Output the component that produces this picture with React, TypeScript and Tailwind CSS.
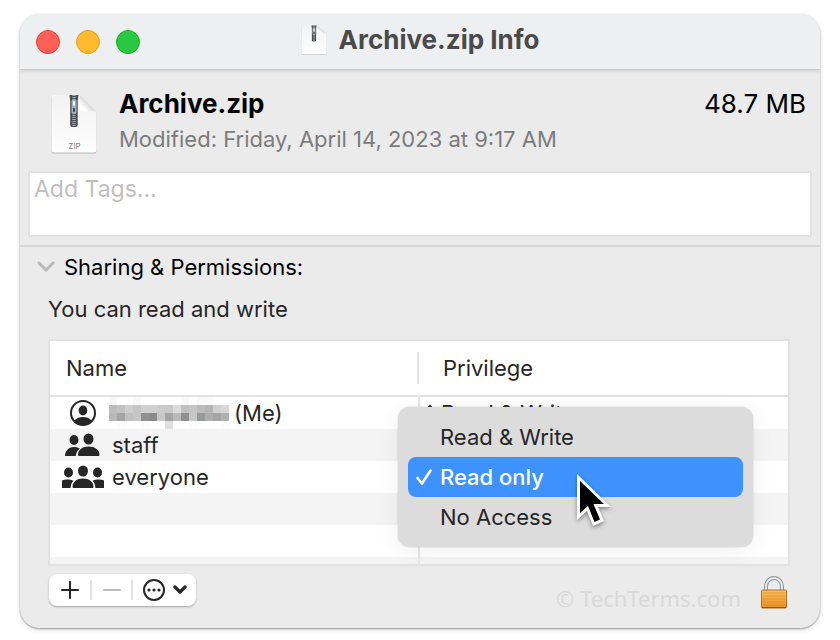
import React, { useState } from 'react';

const NAME_BLOCKS: string[][] = [
  ['#f8f8f8', '#ffffff', '#ffffff', '#f9f9f9', '#ffffff', '#ffffff', '#ffffff', '#ffffff', '#ffffff', '#f9f9f9', '#ffffff', '#f9f9f9', '#fafafa', '#ffffff', '#ffffff'],
  ['#bcbcbc', '#c2c2c2', '#cfcfcf', '#c6c6c6', '#d0d0d0', '#cfcfcf', '#cbcbcb', '#cacaca', '#dcdcdc', '#bfbfbf', '#c6c6c6', '#bcbcbc', '#b5b5b5', '#d0d0d0', '#d8d8d8'],
  ['#b8b8b8', '#a5a5a5', '#c0c0c0', '#c6c6c6', '#919191', '#8b8b8b', '#c8c8c8', '#a5a5a5', '#bababa', '#8e9190', '#c8c8c8', '#979b99', '#adadad', '#a2a5a4', '#b0b0b0'],
  ['#ffffff', '#fcfcfc', '#ffffff', '#ffffff', '#fcfcfc', '#ffffff', '#ffffff', '#e0e0e0', '#ffffff', '#ffffff', '#fcfcfc', '#ffffff', '#ffffff', '#ffffff', '#fcfcfc'],
];

const PRIVILEGES = ['Read & Write', 'Read only', 'No Access'];

const ZipIcon = ({ id, label, className }: { id: string; label?: string; className: string }) => (
  <svg viewBox="0 0 46 60" preserveAspectRatio="none" className={className} aria-hidden="true">
    <defs>
      <linearGradient id={`${id}-page`} x1="0" y1="0" x2="0" y2="1">
        <stop offset="0" stopColor="#f3f3f3" />
        <stop offset="1" stopColor="#fdfdfd" />
      </linearGradient>
      <linearGradient id={`${id}-fold`} x1="0" y1="1" x2="1" y2="0">
        <stop offset="0.2" stopColor="#ffffff" />
        <stop offset="0.5" stopColor="#d8d8d8" />
      </linearGradient>
    </defs>
    <path d="M2.500 2H29l16.500 16.500V57.500a2 2 0 0 1-2 2H2.500a2 2 0 0 1-2-2V4a2 2 0 0 1 2-2z" fill="#b9b9b9" />
    <path d="M2.500 1H29l16.500 16.500V56.500a2 2 0 0 1-2 2H2.500a2 2 0 0 1-2-2V3a2 2 0 0 1 2-2z" fill={`url(#${id}-page)`} />
    <path d="M29 1l16.500 16.500H31a2 2 0 0 1-2-2z" fill={`url(#${id}-fold)`} />
    <path d="M18.500 1h9l-.8 6v24a2 2 0 0 1-2 2h-3.500a2 2 0 0 1-2-2V7z" fill="#4c4d50" />
    <path d="M23 1v31" stroke="#a9abad" strokeWidth="3.500" strokeDasharray="1 1" />
    <rect x="20.500" y="5" width="5" height="15" rx="2.500" fill="#a3b1bb" />
    <rect x="22" y="7" width="2" height="5" rx="1" fill="#e8eef2" />
    <rect x="22" y="14" width="2" height="4" rx="1" fill="#42474b" />
    {label && (
      <text x="23.500" y="55" textAnchor="middle" fontSize="8" fill="#7c7c7c" fontFamily="Inter, sans-serif">
        {label}
      </text>
    )}
  </svg>
);

const MeIcon = () => (
  <svg viewBox="0 0 26 26" className="h-[26px] w-[26px]" aria-hidden="true">
    <circle cx="13" cy="13" r="12" fill="none" stroke="#262626" strokeWidth="2" />
    <ellipse cx="13" cy="10.500" rx="4.300" ry="5" fill="#262626" />
    <path d="M4.500 20.500c2-2.500 5-3.500 8.500-3.500s6.500 1 8.500 3.500c-2 3-5 4.500-8.500 4.500s-6.500-1.500-8.500-4.500z" fill="#262626" />
  </svg>
);

const StaffIcon = () => (
  <svg viewBox="0 0 36 24" className="h-6 w-9" fill="#262626" aria-hidden="true">
    <ellipse cx="10" cy="7" rx="4.500" ry="5" />
    <path d="M1 23c0-5 3.500-9 9-9 2.500 0 4.200.6 5.800 1.700-2.500 1.800-3.800 4.300-4 7.300z" />
    <ellipse cx="24.500" cy="6" rx="5" ry="5.600" />
    <path d="M14 21.500c0-4.500 4.500-8 10.500-8s11 3.500 11 8c0 1-.5 1.500-1.500 1.500H15.500c-1 0-1.500-.5-1.500-1.500z" />
  </svg>
);

const EveryoneIcon = () => (
  <svg viewBox="0 0 42 24" className="h-6 w-[42px]" fill="#262626" aria-hidden="true">
    <ellipse cx="6.500" cy="7.500" rx="4.500" ry="5" />
    <ellipse cx="35.500" cy="7.500" rx="4.500" ry="5" />
    <ellipse cx="21" cy="6" rx="5" ry="5.600" />
    <path d="M0 15.500c3-1.500 8.500-1.500 11.500.2C9.500 17.500 8.700 20 8.600 23H0z" />
    <path d="M42 15.500c-3-1.500-8.500-1.500-11.500.2 2 1.800 2.800 4.300 2.900 7.300H42z" />
    <path d="M10.500 21.500c0-4.500 4.500-8 10.500-8s10.500 3.500 10.500 8c0 1-.5 1.500-1.500 1.500H12c-1 0-1.500-.5-1.500-1.500z" />
  </svg>
);

const LockIcon = () => (
  <svg viewBox="0 0 26 33" className="h-[33px] w-[26px]" aria-hidden="true">
    <defs>
      <linearGradient id="lock-body" x1="0" y1="0" x2="0" y2="1">
        <stop offset="0" stopColor="#fbc566" />
        <stop offset="0.500" stopColor="#f5a93c" />
        <stop offset="1" stopColor="#e8922b" />
      </linearGradient>
    </defs>
    <path d="M5 15v-4.500a8 8.500 0 0 1 16 0V15" fill="none" stroke="#8e959d" strokeWidth="4" />
    <path d="M5 15v-4.500a8 8.500 0 0 1 16 0V15" fill="none" stroke="#e6eaee" strokeWidth="2" />
    <rect x="0.500" y="14" width="25" height="18" rx="1" fill="url(#lock-body)" stroke="#b56a22" />
    <path d="M2 17h22M2 20h22M2 23h22M2 26h22M2 29h22" stroke="#d98a2b" strokeWidth="0.700" />
    <path d="M1 31.500h24" stroke="#9c4f17" />
  </svg>
);

const Cursor = () => (
  <svg
    viewBox="0 0 36 56"
    className="pointer-events-none absolute left-[177px] top-[65px] h-14 w-9 drop-shadow-[0_2px_2px_rgba(0,0,0,0.4)]"
    aria-hidden="true"
  >
    <path d="M2 2v46l10-9 6 15 11-5-6-14h13z" fill="#fff" />
    <path d="M5 9v32l8-7 6.500 16 5.500-2.500L18.500 32H29z" fill="#000" />
  </svg>
);

interface TrafficLightProps {
  label: string;
  className: string;
}

const TrafficLight = ({ label, className }: TrafficLightProps) => (
  <button type="button" aria-label={label} className={`h-6 w-6 rounded-full border ${className}`} />
);

interface PrivilegeMenuProps {
  value: string;
  onSelect: (value: string) => void;
}

const PrivilegeMenu = ({ value, onSelect }: PrivilegeMenuProps) => (
  <div
    role="menu"
    className="absolute -left-[22px] -top-[54px] right-[35px] z-10 rounded-xl bg-[#dcdcdc] p-[10px] shadow-[0_0_2px_rgba(0,0,0,0.2),0_4px_24px_rgba(0,0,0,0.06)]"
  >
    {PRIVILEGES.map((item) => {
      const selected = item === value;
      return (
        <button
          key={item}
          type="button"
          role="menuitemradio"
          aria-checked={selected}
          onClick={() => onSelect(item)}
          className={`flex h-10 w-full items-center rounded-lg text-left ${
            selected ? 'bg-[#3d92fe] font-medium text-white' : 'text-[#262626]'
          }`}
        >
          <span className="flex w-8 justify-center">
            {selected && (
              <svg viewBox="0 0 16 16" className="h-4 w-4" aria-hidden="true">
                <path d="M1.500 9l4.500 5.500L14.500 1.500" fill="none" stroke="#fff" strokeWidth="2.600" strokeLinecap="round" strokeLinejoin="round" />
              </svg>
            )}
          </span>
          {item}
        </button>
      );
    })}
    <Cursor />
  </div>
);

export default function App() {
  const [privilege, setPrivilege] = useState('Read only');
  const [tags, setTags] = useState('');

  return (
    <div className="min-h-screen bg-white px-5 pb-3 pt-[14px] font-['Inter',sans-serif] text-[22px] leading-8 text-[#262626]">
      <main className="overflow-hidden rounded-[20px] bg-[#ebebeb] shadow-[0_1px_2px_rgba(0,0,0,0.35),0_2px_5px_rgba(0,0,0,0.12)]">
        {/* Title bar */}
        <header className="relative z-10 flex h-14 items-center border-b border-[#c9cacb] bg-[#eeeff1] px-4 shadow-[0_1px_3px_rgba(0,0,0,0.12)]">
          <div className="flex flex-1 gap-4">
            <TrafficLight label="Close" className="border-[#e2463f] bg-[#fe5f57]" />
            <TrafficLight label="Minimize" className="border-[#e0a028] bg-[#febb2e]" />
            <TrafficLight label="Zoom" className="border-[#1eac30] bg-[#28c840]" />
          </div>
          <div className="flex items-center gap-3 pb-1">
            <ZipIcon id="title-zip" className="h-[30px] w-[26px]" />
            <h1 className="text-[26px] font-bold text-[#4a4a4a]">Archive.zip Info</h1>
          </div>
          <div className="flex-1" />
        </header>

        {/* File summary */}
        <section className="border-b-2 border-[#d5d5d5] px-2 pb-2 pt-4">
          <div className="flex pl-[23px] pr-[6px]">
            <ZipIcon id="file-zip" label="ZIP" className="mt-2 h-[60px] w-[46px]" />
            <div className="ml-[22px] flex-1">
              <h2 className="text-[26px] font-bold leading-9 text-black">Archive.zip</h2>
              <p className="leading-[34px] text-[#7c7c7c]">Modified: Friday, April 14, 2023 at 9:17 AM</p>
            </div>
            <p className="text-[26px] leading-9 text-black">48.7 MB</p>
          </div>
          <textarea
            aria-label="Tags"
            placeholder="Add Tags..."
            value={tags}
            onChange={(e) => setTags(e.target.value)}
            className="mt-[15px] block h-[66px] w-full resize-none border-2 border-[#e2e2e2] bg-white px-1 text-[23px] leading-8 outline-none placeholder:text-[#bfbfbf]"
          />
        </section>

        {/* Sharing & Permissions */}
        <section className="px-7 pb-[14px] pt-[2px]">
          <button type="button" className="-ml-3 flex items-center gap-2 leading-9 text-black">
            <svg viewBox="0 0 20 12" className="h-3 w-5" aria-hidden="true">
              <path d="M3 2l7 7 7-7" fill="none" stroke="#b9b9b9" strokeWidth="3" strokeLinecap="round" strokeLinejoin="round" />
            </svg>
            Sharing &amp; Permissions:
          </button>
          <p className="mt-2 leading-8">You can read and write</p>

          <div className="mr-[2px] mt-[14px] border-2 border-[#e2e2e2] bg-white">
            <table className="w-full table-fixed border-collapse text-left">
              <thead>
                <tr className="border-b-2 border-[#e2e2e2]">
                  <th className="h-[55px] p-0 font-normal">
                    <div className="flex h-8 items-center border-r-2 border-[#e2e2e2] pl-4">Name</div>
                  </th>
                  <th className="p-0 pl-6 font-normal">Privilege</th>
                </tr>
              </thead>
              <tbody>
                <tr className="h-8">
                  <td className="border-r-2 border-[#e6e6e6] p-0">
                    <div className="flex items-center pl-5">
                      <MeIcon />
                      <div className="ml-[13px] grid grid-cols-[repeat(15,8px)]" aria-hidden="true">
                        {NAME_BLOCKS.flat().map((color, i) => (
                          <span key={i} className="h-2" style={{ backgroundColor: color }} />
                        ))}
                      </div>
                      <span className="ml-[5px]">(Me)</span>
                    </div>
                  </td>
                  <td className="p-0">
                    <div className="flex items-center pl-[5px]">
                      <svg viewBox="0 0 10 18" className="h-[18px] w-[10px]" aria-hidden="true">
                        <path d="M1.500 6L5 2l3.500 4M1.500 12L5 16l3.500-4" fill="none" stroke="#262626" strokeWidth="2" />
                      </svg>
                      <select aria-label="Privilege for owner" className="ml-[6px] h-8 appearance-none bg-transparent outline-none">
                        <option>Read &amp; Write</option>
                      </select>
                    </div>
                  </td>
                </tr>
                <tr className="h-8 bg-[#f4f4f4]">
                  <td className="border-r-2 border-[#e6e6e6] p-0">
                    <div className="flex items-center pl-[14px]">
                      <StaffIcon />
                      <span className="ml-3">staff</span>
                    </div>
                  </td>
                  <td />
                </tr>
                <tr className="h-8">
                  <td className="border-r-2 border-[#e6e6e6] p-0">
                    <div className="flex items-center pl-3">
                      <EveryoneIcon />
                      <span className="ml-2">everyone</span>
                    </div>
                  </td>
                  <td className="relative p-0">
                    <PrivilegeMenu value={privilege} onSelect={setPrivilege} />
                  </td>
                </tr>
                <tr className="h-8 bg-[#f4f4f4]">
                  <td className="border-r-2 border-[#e6e6e6]" />
                  <td />
                </tr>
                <tr className="h-8">
                  <td className="border-r-2 border-[#e6e6e6]" />
                  <td />
                </tr>
                <tr className="h-[7px] bg-[#f4f4f4]">
                  <td className="border-r-2 border-[#e6e6e6] p-0" />
                  <td className="p-0" />
                </tr>
              </tbody>
            </table>
          </div>

          {/* Bottom toolbar */}
          <footer className="mt-2 flex items-start">
            <div className="ml-px flex h-8 items-center rounded-lg bg-white shadow-[0_1px_2px_rgba(0,0,0,0.3)]">
              <button type="button" aria-label="Add" className="flex h-5 w-[41px] items-center justify-center">
                <svg viewBox="0 0 18 18" className="h-[18px] w-[18px]" aria-hidden="true">
                  <path d="M9 1v16M1 9h16" stroke="#262626" strokeWidth="2" strokeLinecap="round" />
                </svg>
              </button>
              <button type="button" aria-label="Remove" disabled className="flex h-5 w-[43px] items-center justify-center border-x-2 border-[#e2e2e2]">
                <svg viewBox="0 0 18 18" className="h-[18px] w-[18px]" aria-hidden="true">
                  <path d="M1 9h16" stroke="#bdbdbd" strokeWidth="2" strokeLinecap="round" />
                </svg>
              </button>
              <button type="button" aria-label="Actions" className="flex h-8 w-[63px] items-center justify-center gap-2">
                <svg viewBox="0 0 22 22" className="h-[22px] w-[22px]" aria-hidden="true">
                  <circle cx="11" cy="11" r="10" fill="none" stroke="#262626" strokeWidth="2" />
                  <g fill="#262626">
                    <circle cx="6" cy="11" r="1.600" />
                    <circle cx="11" cy="11" r="1.600" />
                    <circle cx="16" cy="11" r="1.600" />
                  </g>
                </svg>
                <svg viewBox="0 0 14 10" className="h-[10px] w-[14px]" aria-hidden="true">
                  <path d="M2 2l5 5 5-5" fill="none" stroke="#262626" strokeWidth="3.200" strokeLinecap="round" strokeLinejoin="round" />
                </svg>
              </button>
            </div>
            <p className="ml-auto mt-2 font-['Noto_Sans',sans-serif] text-[#d9d9d9]">© TechTerms.com</p>
            <button type="button" aria-label="Unlock" className="ml-5 mr-[5px] mt-[2px]">
              <LockIcon />
            </button>
          </footer>
        </section>
      </main>
    </div>
  );
}
